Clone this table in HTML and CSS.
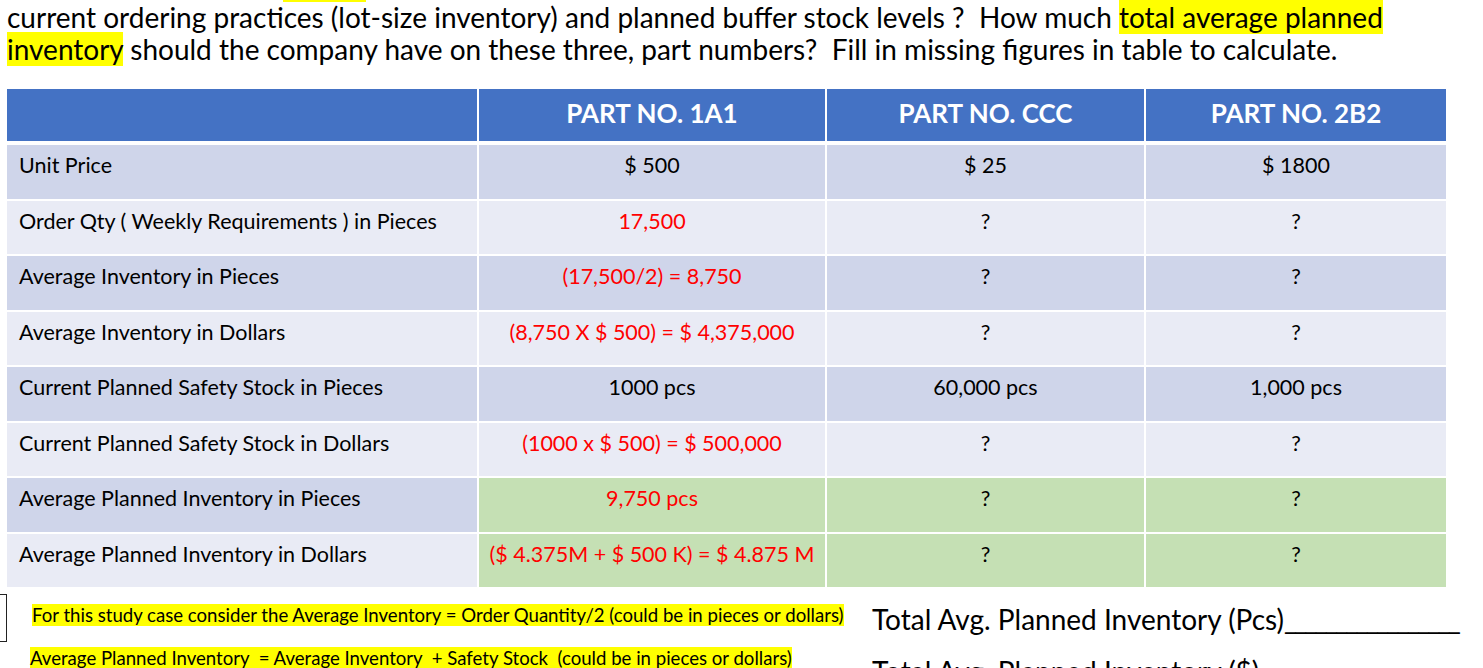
FILE: index.html
```html
<!DOCTYPE html>
<html>
<head>
<meta charset="utf-8">
<link rel="stylesheet" href="styles.css">
</head>
<body>
<div class="page">
  <div class="prev-hl"></div>
  <p class="intro">current ordering practices (lot-size inventory) and planned buffer stock levels ?&nbsp; How much <span class="hl">total average planned</span><br><span class="hl">inventory</span> should the company have on these three, part numbers?&nbsp; Fill in missing figures in table to calculate.</p>

  <div class="table">
    <div class="row head">
      <div class="cell"></div>
      <div class="cell">PART NO. 1A1</div>
      <div class="cell">PART NO. CCC</div>
      <div class="cell">PART NO. 2B2</div>
    </div>
    <div class="body">
      <div class="row dark">
        <div class="cell label">Unit Price</div>
        <div class="cell">$ 500</div>
        <div class="cell">$ 25</div>
        <div class="cell">$ 1800</div>
      </div>
      <div class="row light">
        <div class="cell label">Order Qty ( Weekly Requirements ) in Pieces</div>
        <div class="cell red">17,500</div>
        <div class="cell">?</div>
        <div class="cell">?</div>
      </div>
      <div class="row dark">
        <div class="cell label">Average Inventory in Pieces</div>
        <div class="cell red">(17,500/2) = 8,750</div>
        <div class="cell">?</div>
        <div class="cell">?</div>
      </div>
      <div class="row light">
        <div class="cell label">Average Inventory in Dollars</div>
        <div class="cell red">(8,750 X $ 500) = $ 4,375,000</div>
        <div class="cell">?</div>
        <div class="cell">?</div>
      </div>
      <div class="row dark">
        <div class="cell label">Current Planned Safety Stock in Pieces</div>
        <div class="cell">1000 pcs</div>
        <div class="cell">60,000 pcs</div>
        <div class="cell">1,000 pcs</div>
      </div>
      <div class="row light">
        <div class="cell label">Current Planned Safety Stock in Dollars</div>
        <div class="cell red">(1000 x $ 500) = $ 500,000</div>
        <div class="cell">?</div>
        <div class="cell">?</div>
      </div>
      <div class="row dark green">
        <div class="cell label">Average Planned Inventory in Pieces</div>
        <div class="cell red">9,750 pcs</div>
        <div class="cell">?</div>
        <div class="cell">?</div>
      </div>
      <div class="row light green">
        <div class="cell label">Average Planned Inventory in Dollars</div>
        <div class="cell red">($ 4.375M + $ 500 K) = $ 4.875 M</div>
        <div class="cell">?</div>
        <div class="cell">?</div>
      </div>
    </div>
  </div>

  <div class="bottom">
    <div class="box"></div>
    <div class="notes">
      <div class="note n1"><span class="hl">For this study case consider the Average Inventory = Order Quantity/2 (could be in pieces or dollars)</span></div>
      <div class="note n2"><span class="hl">Average Planned Inventory&nbsp; = Average Inventory&nbsp; + Safety Stock&nbsp; (could be in pieces or dollars)</span></div>
    </div>
    <div class="totals">
      <div class="total">Total Avg. Planned Inventory (Pcs)<span class="blank">_________________</span></div>
      <div class="total">Total Avg. Planned Inventory ($)<span class="blank">_________________</span></div>
    </div>
  </div>
</div>
</body>
</html>
```

FILE: styles.css
```css
html, body {
  margin: 0;
  padding: 0;
  background: #ffffff;
  overflow: hidden;
}
.page {
  width: 1483px;
  height: 668px;
  overflow: hidden;
  font-family: Lato, "Open Sans", sans-serif;
  color: #000;
}
.prev-hl {
  margin-left: 283px;
  width: 83px;
  height: 2px;
  background: #ffff00;
}
.intro {
  margin: 0;
  margin-top: -1px;
  padding-left: 7px;
  font-size: 28px;
  line-height: 32px;
  white-space: nowrap;
}
.hl {
  background: #ffff00;
}
.table {
  margin-top: 24px;
  margin-left: 7px;
  width: 1439px;
}
.row {
  display: grid;
  grid-template-columns: 470px 346px 317px 300px;
  column-gap: 2px;
}
.head {
  height: 52px;
  margin-bottom: 4px;
}
.head .cell {
  background: #4472c4;
  color: #fff;
  font-weight: bold;
  font-size: 26px;
  line-height: 32px;
  text-align: center;
  padding-top: 8px;
  box-sizing: border-box;
}
.body {
  display: grid;
  grid-template-rows: repeat(8, 53.5px);
  row-gap: 2px;
}
.body .cell {
  font-size: 21.5px;
  line-height: 26px;
  padding-top: 7px;
  text-align: center;
  box-sizing: border-box;
  white-space: nowrap;
}
.body .cell.label {
  text-align: left;
  padding-left: 12px;
}
.dark .cell { background: #cfd5ea; }
.light .cell { background: #e9ebf5; }
.green .cell:not(.label) { background: #c5e0b4; }
.red { color: #ff0000; }

.bottom {
  display: flex;
  margin-top: 7px;
}
.box {
  width: 6px;
  height: 46px;
  border: 1.5px solid #222;
  border-left: none;
  flex: none;
}
.notes {
  width: 840px;
  flex: none;
  padding-top: 9px;
}
.note {
  font-size: 18.6px;
  line-height: 25px;
  white-space: nowrap;
}
.n1 { padding-left: 25px; }
.n2 { padding-left: 23px; margin-top: 18px; }
.totals {
  padding-left: 25px;
  margin-top: -1px;
}
.total {
  font-size: 28px;
  line-height: 52px;
  white-space: nowrap;
}
.blank {
  letter-spacing: -2.6px;
}
```
